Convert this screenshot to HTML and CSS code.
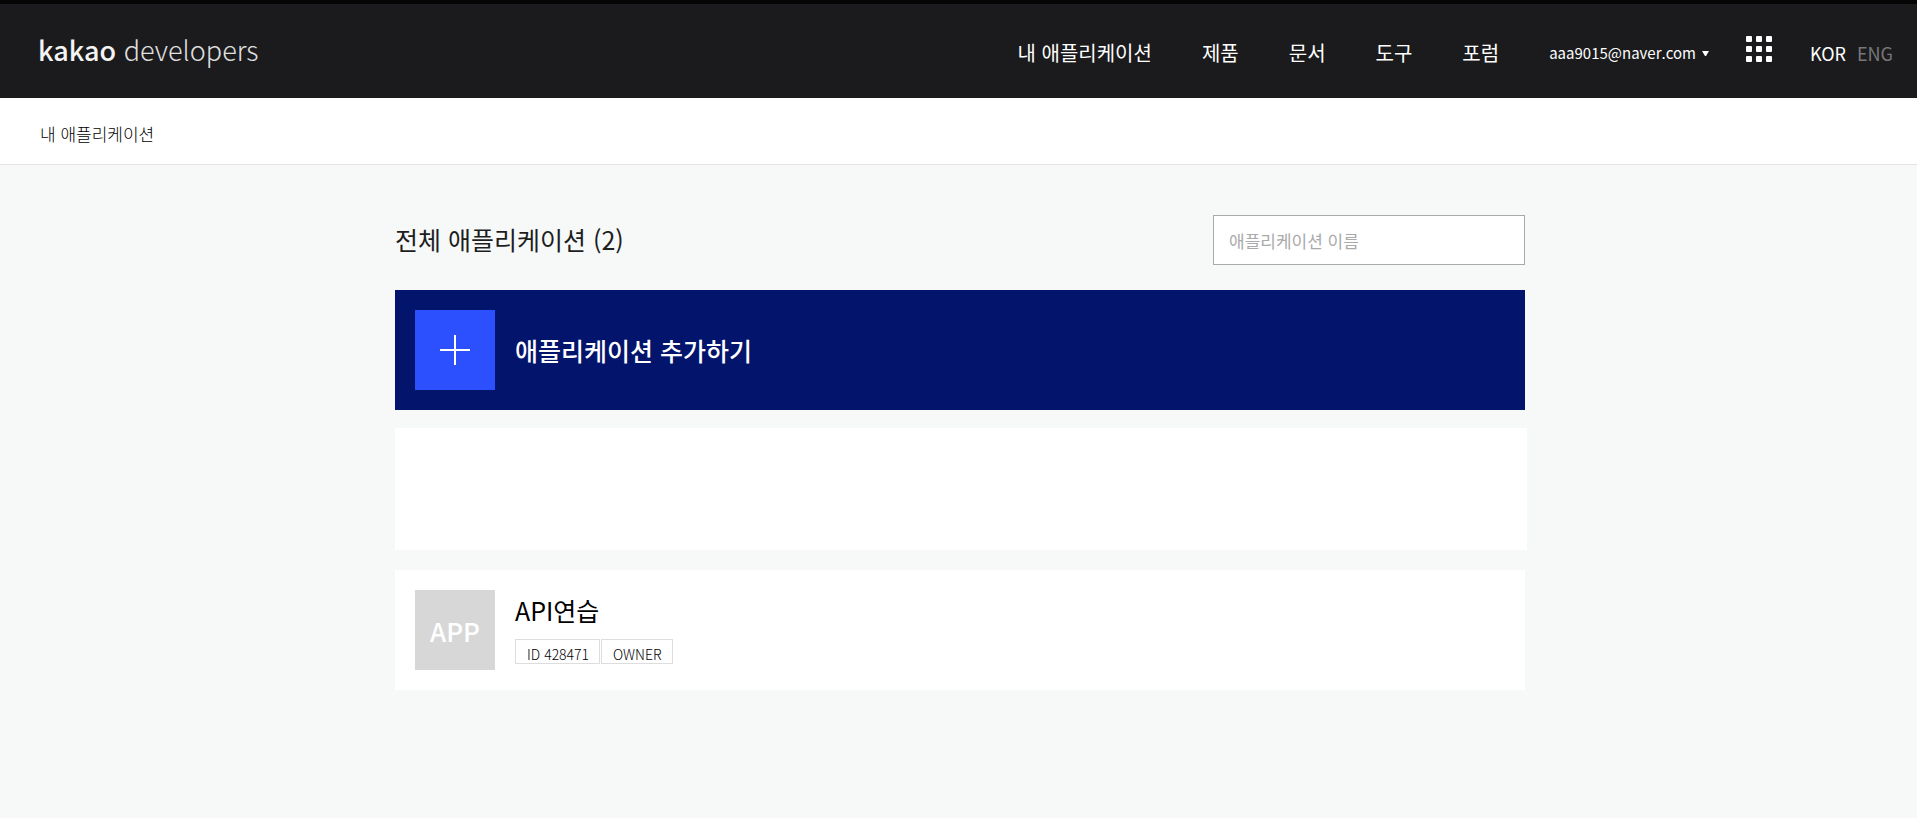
FILE: index.html
```html
<!DOCTYPE html>
<html lang="ko">
<head>
	<meta charset="UTF-8">
	<title>내 애플리케이션 | Kakao Developers</title>
	<link rel="stylesheet" href="styles.css">
</head>
<body>
	<header class="header">
		<a class="logo" href="#"><b>kakao</b> developers</a>
		<nav class="gnb">
			<a href="#">내 애플리케이션</a>
			<a href="#">제품</a>
			<a href="#">문서</a>
			<a href="#">도구</a>
			<a href="#">포럼</a>
		</nav>
		<button class="account" type="button">aaa9015@naver.com
			<svg width="7" height="5" viewBox="0 0 7 5"><path d="M0 0h7L4 5H3z" fill="#fff"/></svg>
		</button>
		<button class="services" type="button" aria-label="서비스">
			<svg width="26" height="26" viewBox="0 0 26 26" fill="#fff">
				<rect width="6" height="6" rx="1"/>
				<rect x="10" width="6" height="6" rx="1"/>
				<rect x="20" width="6" height="6" rx="1"/>
				<rect y="10" width="6" height="6" rx="1"/>
				<rect x="10" y="10" width="6" height="6" rx="1"/>
				<rect x="20" y="10" width="6" height="6" rx="1"/>
				<rect y="20" width="6" height="6" rx="1"/>
				<rect x="10" y="20" width="6" height="6" rx="1"/>
				<rect x="20" y="20" width="6" height="6" rx="1"/>
			</svg>
		</button>
		<div class="lang">
			<a class="on" href="#">KOR</a>
			<a href="#">ENG</a>
		</div>
	</header>

	<div class="location"><a href="#">내 애플리케이션</a></div>

	<main class="content">
		<div class="list-head">
			<h1>전체 애플리케이션 (2)</h1>
			<input class="search" type="text" placeholder="애플리케이션 이름" aria-label="애플리케이션 이름">
		</div>

		<button class="add-app" type="button">
			<span class="thumb">
				<svg width="30" height="30" viewBox="0 0 30 30"><path d="M0 15h30M15 0v30" stroke="#fff" stroke-width="2"/></svg>
			</span>
			애플리케이션 추가하기
		</button>

		<ul class="app-list">
			<li class="app blank"></li>
			<li class="app">
				<span class="thumb">APP</span>
				<div class="info">
					<a class="name" href="#">API연습</a>
					<div class="tags">
						<span class="tag">ID 428471</span>
						<span class="tag">OWNER</span>
					</div>
				</div>
			</li>
		</ul>
	</main>
</body>
</html>
```
FILE: styles.css
```css
* {
	box-sizing: border-box;
}
body {
	margin: 0;
	background-color: #f7f9f9;
	color: #1e1e1e;
	font-family: "Noto Sans CJK KR", sans-serif;
	font-weight: 400;
}
a {
	color: inherit;
	text-decoration: none;
}
button {
	padding: 0;
	border: 0;
	background: none;
	color: inherit;
	font-family: inherit;
	cursor: pointer;
}
svg {
	display: block;
}

/* header */
.header {
	display: flex;
	align-items: center;
	height: 98px;
	padding: 4px 24px 0 38px;
	border-top: 4px solid #050505;
	background-color: #1b1b1d;
	color: #fff;
}
.logo {
	margin-right: auto;
	padding-bottom: 6px;
	color: #e0e0e0;
	font-size: 27px;
	font-weight: 300;
	line-height: 40px;
}
.logo b {
	color: #f4f4f4;
	font-weight: 500;
}
.gnb {
	display: flex;
	gap: 50px;
	font-size: 20px;
	line-height: 30px;
}
.account {
	display: flex;
	align-items: center;
	gap: 6px;
	margin-left: 50px;
	font-size: 15px;
	line-height: 24px;
}
.services {
	margin: 0 38px 0 37px;
	padding-bottom: 8px;
}
.lang {
	display: flex;
	gap: 11px;
	color: #77777a;
	font-size: 18px;
	line-height: 28px;
}
.lang .on {
	color: #fff;
}

/* location */
.location {
	height: 67px;
	padding: 22px 40px 0;
	border-bottom: 1px solid #e4e4e4;
	background-color: #fff;
	color: #000;
	font-size: 17px;
	font-weight: 300;
	line-height: 28px;
}

/* application list */
.content {
	max-width: 1133px;
	margin: 0 auto;
	padding: 50px 0 60px 3px;
}
.list-head {
	display: flex;
	align-items: center;
	justify-content: space-between;
	margin-bottom: 25px;
}
h1 {
	margin: 0;
	padding-bottom: 2px;
	font-size: 25px;
	font-weight: 400;
	line-height: 36px;
}
.search {
	width: 312px;
	height: 50px;
	padding: 0 15px;
	border: 1px solid #a9a9a9;
	background-color: #fff;
	font-family: inherit;
	font-size: 17px;
}
.search::placeholder {
	color: #aaa;
}
.add-app {
	display: flex;
	align-items: center;
	gap: 20px;
	width: 100%;
	height: 120px;
	padding: 20px;
	background-color: #02146b;
	color: #fff;
	font-size: 25px;
	font-weight: 500;
}
.thumb {
	display: flex;
	align-items: center;
	justify-content: center;
	width: 80px;
	height: 80px;
}
.add-app .thumb {
	background-color: #2d50ff;
}
.app-list {
	display: grid;
	gap: 20px;
	margin: 18px 0 0;
	padding: 0;
	list-style: none;
}
.app {
	display: flex;
	gap: 20px;
	height: 120px;
	padding: 20px;
	background-color: #fff;
}
.app.blank {
	height: 122px;
	margin-right: -2px;
}
.app .thumb {
	background-color: #d7d7d7;
	color: #fff;
	font-size: 26px;
	font-weight: 500;
}
.name {
	display: block;
	margin-bottom: 9px;
	color: #000;
	font-size: 25px;
	line-height: 40px;
}
.tags {
	display: flex;
	gap: 1px;
}
.tag {
	height: 25px;
	padding: 3px 10px 0 11px;
	border: 1px solid #ddd;
	color: #000;
	font-size: 14px;
	font-weight: 300;
	line-height: 22px;
}
```
